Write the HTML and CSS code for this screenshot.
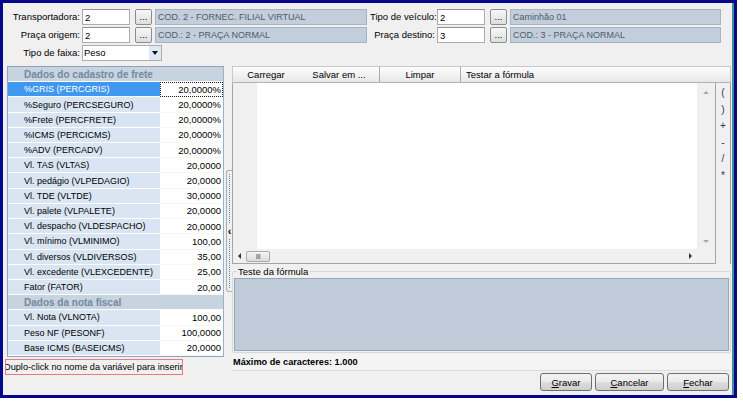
FILE: index.html
```html
<!DOCTYPE html>
<html lang="pt-BR">
<head>
    <meta charset="UTF-8">
    <title>Fórmula de frete</title>
    <link rel="stylesheet" href="styles.css">
</head>
<body>
    <div class="window">
        <div class="filters">
            <div class="filter-row">
                <div class="field">
                    <label class="field-label">Transportadora:</label>
                    <input class="code-input" type="text" value="2">
                    <button class="dots-btn">...</button>
                    <div class="lookup">COD. 2 - FORNEC. FILIAL VIRTUAL</div>
                </div>
                <div class="field field-right">
                    <label class="field-label">Tipo de veículo:</label>
                    <input class="code-input" type="text" value="2">
                    <button class="dots-btn">...</button>
                    <div class="lookup">Caminhão 01</div>
                </div>
            </div>
            <div class="filter-row">
                <div class="field">
                    <label class="field-label">Praça origem:</label>
                    <input class="code-input" type="text" value="2">
                    <button class="dots-btn">...</button>
                    <div class="lookup">COD.: 2 - PRAÇA NORMAL</div>
                </div>
                <div class="field field-right">
                    <label class="field-label">Praça destino:</label>
                    <input class="code-input" type="text" value="3">
                    <button class="dots-btn">...</button>
                    <div class="lookup">COD.: 3 - PRAÇA NORMAL</div>
                </div>
            </div>
            <div class="filter-row">
                <div class="field">
                    <label class="field-label">Tipo de faixa:</label>
                    <div class="select-box">
                        <span class="select-value">Peso</span>
                        <span class="select-arrow"></span>
                    </div>
                </div>
            </div>
        </div>

        <div class="main">
            <div class="left-col">
                <div class="vars">
                    <div class="var-group">Dados do cadastro de frete</div>
                    <div class="var-row selected"><span class="var-name">%GRIS (PERCGRIS)</span><span class="var-value">20,0000%</span></div>
                    <div class="var-row"><span class="var-name">%Seguro (PERCSEGURO)</span><span class="var-value">20,0000%</span></div>
                    <div class="var-row"><span class="var-name">%Frete (PERCFRETE)</span><span class="var-value">20,0000%</span></div>
                    <div class="var-row"><span class="var-name">%ICMS (PERCICMS)</span><span class="var-value">20,0000%</span></div>
                    <div class="var-row"><span class="var-name">%ADV (PERCADV)</span><span class="var-value">20,0000%</span></div>
                    <div class="var-row"><span class="var-name">Vl. TAS (VLTAS)</span><span class="var-value">20,0000</span></div>
                    <div class="var-row"><span class="var-name">Vl. pedágio (VLPEDAGIO)</span><span class="var-value">20,0000</span></div>
                    <div class="var-row"><span class="var-name">Vl. TDE (VLTDE)</span><span class="var-value">30,0000</span></div>
                    <div class="var-row"><span class="var-name">Vl. palete (VLPALETE)</span><span class="var-value">20,0000</span></div>
                    <div class="var-row"><span class="var-name">Vl. despacho (VLDESPACHO)</span><span class="var-value">20,0000</span></div>
                    <div class="var-row"><span class="var-name">Vl. mínimo (VLMINIMO)</span><span class="var-value">100,00</span></div>
                    <div class="var-row"><span class="var-name">Vl. diversos (VLDIVERSOS)</span><span class="var-value">35,00</span></div>
                    <div class="var-row"><span class="var-name">Vl. excedente (VLEXCEDENTE)</span><span class="var-value">25,00</span></div>
                    <div class="var-row"><span class="var-name">Fator (FATOR)</span><span class="var-value">20,00</span></div>
                    <div class="var-group">Dados da nota fiscal</div>
                    <div class="var-row"><span class="var-name">Vl. Nota (VLNOTA)</span><span class="var-value">100,00</span></div>
                    <div class="var-row"><span class="var-name">Peso NF (PESONF)</span><span class="var-value">100,0000</span></div>
                    <div class="var-row"><span class="var-name">Base ICMS (BASEICMS)</span><span class="var-value">20,0000</span></div>
                </div>
                <div class="hint">Duplo-click no nome da variável para inserir</div>
            </div>

            <div class="splitter">
                <div class="splitter-handle">
                    <span class="grip"></span>
                    <span class="splitter-arrow">&lsaquo;</span>
                    <span class="grip"></span>
                </div>
            </div>

            <div class="right-col">
                <div class="toolbar">
                    <span class="tool tool-first">Carregar</span>
                    <span class="tool">Salvar em ...</span>
                    <span class="tool-sep"></span>
                    <span class="tool">Limpar</span>
                    <span class="tool-sep"></span>
                    <span class="tool tool-last">Testar a fórmula</span>
                </div>

                <div class="editor-row">
                    <div class="editor">
                        <div class="editor-main">
                            <div class="editor-body">
                                <div class="gutter"></div>
                                <div class="text-area"></div>
                            </div>
                            <div class="hscroll">
                                <span class="arrow arrow-left"></span>
                                <span class="hthumb">III</span>
                                <span class="hscroll-track"></span>
                                <span class="arrow arrow-right"></span>
                            </div>
                        </div>
                        <div class="vscroll">
                            <span class="arrow arrow-up"></span>
                            <span class="vscroll-track"></span>
                            <span class="arrow arrow-down"></span>
                        </div>
                    </div>
                    <div class="operators">
                        <span class="op">(</span>
                        <span class="op">)</span>
                        <span class="op">+</span>
                        <span class="op">-</span>
                        <span class="op">/</span>
                        <span class="op">*</span>
                    </div>
                </div>

                <fieldset class="test-group">
                    <legend>Teste da fórmula</legend>
                    <div class="test-area"></div>
                </fieldset>

                <div class="max-chars">Máximo de caracteres: 1.000</div>

                <div class="actions">
                    <button class="action-btn btn-save"><u>G</u>ravar</button>
                    <button class="action-btn btn-cancel"><u>C</u>ancelar</button>
                    <button class="action-btn btn-close"><u>F</u>echar</button>
                </div>
            </div>
        </div>
    </div>
</body>
</html>
```

FILE: styles.css
```css
body {
    margin: 0;
    background-color: #fff;
    font-family: "Liberation Sans", Arial, sans-serif;
    font-size: 9.5px;
    color: #000;
}
.window {
    width: 737px;
    height: 398px;
    box-sizing: border-box;
    border: 3px solid #07078a;
    background-color: #f0f0f0;
    box-shadow: inset -2px 0 0 #3f8f98;
    display: flex;
    flex-direction: column;
}

/* filtros do topo */
.filters {
    padding: 6px 0 0 2px;
    display: flex;
    flex-direction: column;
    gap: 2px;
}
.filter-row {
    display: flex;
    height: 16px;
}
.field {
    display: flex;
}
.field-right {
    margin-left: 3px;
}
.field-label {
    width: 75px;
    margin-right: 2px;
    text-align: right;
    line-height: 16px;
    white-space: nowrap;
}
.field-right .field-label {
    width: 65px;
}
.code-input {
    width: 48px;
    height: 16px;
    box-sizing: border-box;
    margin: 0;
    padding: 0 2px;
    border: 1px solid #abadb3;
    border-top-color: #8e9198;
    background-color: #fff;
    font: inherit;
}
.dots-btn {
    width: 17px;
    height: 16px;
    margin: 0 0 0 5px;
    padding: 0;
    border: 1px solid #8c8c8c;
    border-radius: 2px;
    background: linear-gradient(#f7f7f7, #dedede);
    font: inherit;
    line-height: 12px;
}
.lookup {
    width: 212px;
    height: 16px;
    box-sizing: border-box;
    margin-left: 3px;
    padding-left: 2px;
    border: 1px solid #a9b3bf;
    background-color: #c2cedb;
    color: #4e5b69;
    font-size: 9px;
    line-height: 14px;
    white-space: nowrap;
}
.field-right .lookup {
    width: 211px;
}
.select-box {
    width: 80px;
    height: 16px;
    box-sizing: border-box;
    display: flex;
    border: 1px solid #abadb3;
    background-color: #fff;
}
.select-value {
    flex: 1;
    padding-left: 1px;
    line-height: 14px;
}
.select-arrow {
    width: 12px;
    background-color: #dfe9f6;
    display: flex;
    align-items: center;
    justify-content: center;
}
.select-arrow::after {
    content: "";
    border-left: 3px solid transparent;
    border-right: 3px solid transparent;
    border-top: 4px solid #111;
}

/* area principal */
.main {
    flex: 1;
    display: flex;
    margin-top: 5px;
    padding: 0 3px 0 2px;
    min-height: 0;
}
.left-col {
    width: 220px;
    display: flex;
    flex-direction: column;
}
.vars {
    width: 217px;
    height: 291px;
    box-sizing: border-box;
    margin-left: 2px;
    border: 1px solid #8fa4bc;
    border-right-color: #9fb0c4;
    background-color: #fff;
    display: grid;
    grid-template-rows: repeat(19, 1fr);
}
.var-group {
    padding-left: 16px;
    background-color: #c7d3df;
    color: #7388a0;
    font-weight: bold;
    font-size: 10px;
    display: flex;
    align-items: center;
    border-bottom: 1px solid #fff;
}
.var-row {
    display: grid;
    grid-template-columns: 152px 1fr;
    min-height: 0;
}
.var-name {
    padding-left: 16px;
    background-color: #d9e5f3;
    border-bottom: 1px solid #fff;
    font-size: 9px;
    white-space: nowrap;
    overflow: hidden;
    display: flex;
    align-items: center;
}
.var-value {
    padding-right: 2px;
    font-size: 9.5px;
    display: flex;
    align-items: center;
    justify-content: flex-end;
    border-bottom: 1px solid #f4f6f8;
}
.selected .var-name {
    background-color: #3f97ef;
    color: #fff;
}
.selected .var-value {
    outline: 1px dotted #222;
    outline-offset: -1px;
}
.hint {
    width: 178px;
    height: 16px;
    box-sizing: border-box;
    margin-top: 2px;
    border: 1px solid #e77a7a;
    font-size: 9.2px;
    line-height: 14px;
    white-space: nowrap;
    overflow: hidden;
    text-indent: -2px;
}

.splitter {
    width: 7px;
}
.splitter-handle {
    margin-top: 104px;
    margin-left: 1px;
    height: 122px;
    box-sizing: border-box;
    border: 1px solid #9fb0c4;
    border-right: none;
    border-radius: 3px 0 0 3px;
    display: flex;
    flex-direction: column;
    align-items: center;
}
.grip {
    flex: 1;
    margin: 3px 0;
    border-left: 1px dotted #6d7d92;
}
.splitter-arrow {
    font-weight: bold;
    font-size: 11px;
    line-height: 10px;
}

/* editor da formula */
.right-col {
    flex: 1;
    display: flex;
    flex-direction: column;
}
.toolbar {
    height: 17px;
    box-sizing: border-box;
    border: 1px solid #c9c9c9;
    border-bottom-color: #b3b3b3;
    background: linear-gradient(#fdfdfd, #e7e7e7);
    display: flex;
    align-items: center;
}
.tool {
    width: 80px;
    text-align: center;
    line-height: 15px;
    white-space: nowrap;
}
.tool-first {
    width: 66px;
}
.tool-last {
    width: auto;
    padding-left: 5px;
}
.tool-sep {
    width: 1px;
    height: 15px;
    background-color: #a9a9a9;
}
.editor-row {
    height: 181px;
    display: flex;
}
.editor {
    flex: 1;
    display: flex;
    border: 1px solid #a5a5a5;
    border-top: none;
}
.editor-main {
    flex: 1;
    display: flex;
    flex-direction: column;
}
.editor-body {
    flex: 1;
    display: flex;
}
.gutter {
    width: 24px;
    background-color: #f0f0f0;
}
.text-area {
    flex: 1;
    background-color: #fff;
}
.hscroll {
    height: 14px;
    background-color: #f0f0f0;
    display: flex;
    align-items: center;
    padding: 0 5px;
}
.hthumb {
    width: 24px;
    height: 11px;
    margin-left: 5px;
    box-sizing: border-box;
    border: 1px solid #a9a9a9;
    border-radius: 2px;
    background: linear-gradient(#f5f5f5, #dcdcdc);
    color: #555;
    font-size: 7px;
    line-height: 9px;
    text-align: center;
    letter-spacing: -0.5px;
}
.hscroll-track {
    flex: 1;
}
.vscroll {
    width: 18px;
    background-color: #f0f0f0;
    display: flex;
    flex-direction: column;
    align-items: center;
    padding: 8px 0 20px;
    box-sizing: border-box;
}
.vscroll-track {
    flex: 1;
}
.arrow {
    width: 0;
    height: 0;
}
.arrow-left {
    border-top: 3px solid transparent;
    border-bottom: 3px solid transparent;
    border-right: 3px solid #333;
}
.arrow-right {
    border-top: 3px solid transparent;
    border-bottom: 3px solid transparent;
    border-left: 3px solid #333;
}
.arrow-up {
    border-left: 3px solid transparent;
    border-right: 3px solid transparent;
    border-bottom: 3px solid #a8a8a8;
}
.arrow-down {
    border-left: 3px solid transparent;
    border-right: 3px solid transparent;
    border-top: 3px solid #a8a8a8;
}
.operators {
    width: 15px;
    box-sizing: border-box;
    border-right: 1px solid #9c9c9c;
    padding-top: 2px;
    display: flex;
    flex-direction: column;
    align-items: center;
}
.op {
    height: 16.6px;
    line-height: 16px;
    color: #1d3b6c;
    font-size: 10px;
}

.test-group {
    margin: 2px 0 0;
    padding: 0 1px 1px;
    border: 1px solid #d9d9d9;
    border-radius: 2px;
}
.test-group legend {
    margin-left: 3px;
    padding: 0 1px;
    line-height: 11px;
}
.test-area {
    height: 73px;
    box-sizing: border-box;
    margin-top: 1px;
    border: 1px solid #9aa7b5;
    background-color: #bfcbd8;
}
.max-chars {
    margin-top: 1px;
    height: 17px;
    box-sizing: border-box;
    padding-left: 1px;
    border-bottom: 1px solid #dcdcdc;
    background-color: #f4f4f4;
    font-weight: bold;
    font-size: 9.2px;
    line-height: 16px;
}
.actions {
    margin-top: 2px;
    padding-right: 2px;
    display: flex;
    justify-content: flex-end;
    gap: 3px;
}
.action-btn {
    height: 18px;
    margin: 0;
    padding: 0;
    border: 1px solid #707070;
    border-radius: 3px;
    background: linear-gradient(#f3f3f3 0%, #ebebeb 48%, #dddddd 52%, #cfcfcf 100%);
    font: inherit;
    color: #000;
}
.btn-save {
    width: 52px;
}
.btn-cancel {
    width: 69px;
}
.btn-close {
    width: 62px;
}
```
